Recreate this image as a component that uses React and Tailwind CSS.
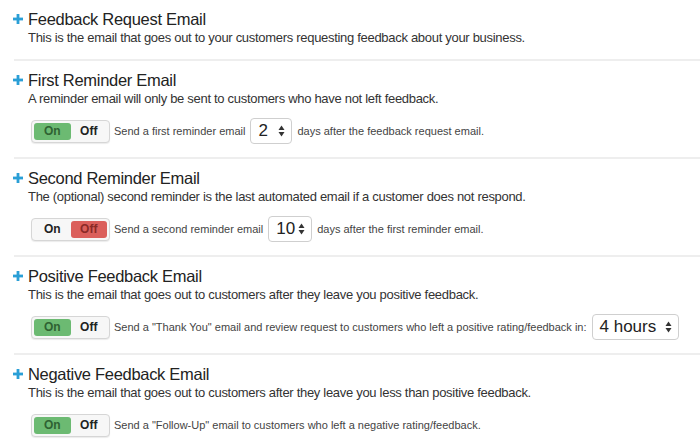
import { useState } from "react";

const PlusIcon = () => (
  <svg width="10" height="10" viewBox="0 0 10 10" className="shrink-0">
    <rect x="3.6" y="0" width="2.8" height="10" fill="#2a9fd6" />
    <rect x="0" y="3.6" width="10" height="2.8" fill="#2a9fd6" />
  </svg>
);

const Arrows = () => (
  <svg width="7" height="12" viewBox="0 0 7 12">
    <path d="M3.5 0.5 L6.5 5 L0.5 5 Z" fill="#333" />
    <path d="M3.5 11.5 L6.5 7 L0.5 7 Z" fill="#333" />
  </svg>
);

const Toggle = ({ on, onChange }) => (
  <div className="flex h-[23px] w-[79px] shrink-0 rounded-[4px] border border-[#d6d6d6] bg-[#f7f7f7] p-[2px] shadow-[0_1px_1px_rgba(0,0,0,0.08)]">
    <button
      onClick={() => onChange(true)}
      className={`flex-1 rounded-[3px] text-[12px] font-bold leading-none ${
        on ? "bg-[#6cba72] text-[#2f6232]" : "text-[#222]"
      }`}
    >
      On
    </button>
    <button
      onClick={() => onChange(false)}
      className={`flex-1 rounded-[3px] text-[12px] font-bold leading-none ${
        on ? "text-[#222]" : "bg-[#db5f5b] text-[#8b2a27]"
      }`}
    >
      Off
    </button>
  </div>
);

const FakeSelect = ({ value, width }) => (
  <div
    className={`mx-[5px] flex h-[26px] shrink-0 items-center justify-between rounded-[4px] border border-[#cfcfcf] bg-white pl-[7px] pr-[6px] text-[17px] text-[#222] ${width}`}
  >
    <span>{value}</span>
    <Arrows />
  </div>
);

const Section = ({ title, desc, children, last }) => (
  <div className={`pt-[9px] ${children ? "pb-[13px]" : "pb-[12px]"} ${last ? "" : "border-b-2 border-[#eeeeee]"}`}>
    <div className="flex h-[20px] items-center gap-[5px] -ml-[1px]">
      <PlusIcon />
      <h3 className="text-[16.5px] leading-[20px] tracking-[-0.3px] text-[#222]">{title}</h3>
    </div>
    <p className="pl-[14px] text-[13px] leading-[18px] tracking-[-0.3px] text-[#333]">{desc}</p>
    {children && (
      <div className="mt-[10px] flex h-[26px] items-center pl-[17px] text-[11px] text-[#444]">
        {children}
      </div>
    )}
  </div>
);

export default function App() {
  const [toggles, setToggles] = useState({ first: true, second: false, positive: true, negative: true });
  const set = (k) => (v) => setToggles((t) => ({ ...t, [k]: v }));

  return (
    <div className="h-[446px] w-[700px] overflow-hidden bg-white pl-[14px] font-['Liberation_Sans',Arial,sans-serif]">
      <Section
        title="Feedback Request Email"
        desc="This is the email that goes out to your customers requesting feedback about your business."
      />
      <Section
        title="First Reminder Email"
        desc="A reminder email will only be sent to customers who have not left feedback."
      >
        <Toggle on={toggles.first} onChange={set("first")} />
        <span className="ml-[4px]">Send a first reminder email</span>
        <FakeSelect value="2" width="w-[42px]" />
        <span>days after the feedback request email.</span>
      </Section>
      <Section
        title="Second Reminder Email"
        desc="The (optional) second reminder is the last automated email if a customer does not respond."
      >
        <Toggle on={toggles.second} onChange={set("second")} />
        <span className="ml-[4px]">Send a second reminder email</span>
        <FakeSelect value="10" width="w-[44px]" />
        <span>days after the first reminder email.</span>
      </Section>
      <Section
        title="Positive Feedback Email"
        desc="This is the email that goes out to customers after they leave you positive feedback."
      >
        <Toggle on={toggles.positive} onChange={set("positive")} />
        <span className="ml-[4px]">
          Send a "Thank You" email and review request to customers who left a positive rating/feedback in:
        </span>
        <FakeSelect value="4 hours" width="w-[87px]" />
      </Section>
      <Section
        title="Negative Feedback Email"
        desc="This is the email that goes out to customers after they leave you less than positive feedback."
        last
      >
        <Toggle on={toggles.negative} onChange={set("negative")} />
        <span className="ml-[4px]">Send a "Follow-Up" email to customers who left a negative rating/feedback.</span>
      </Section>
    </div>
  );
}
